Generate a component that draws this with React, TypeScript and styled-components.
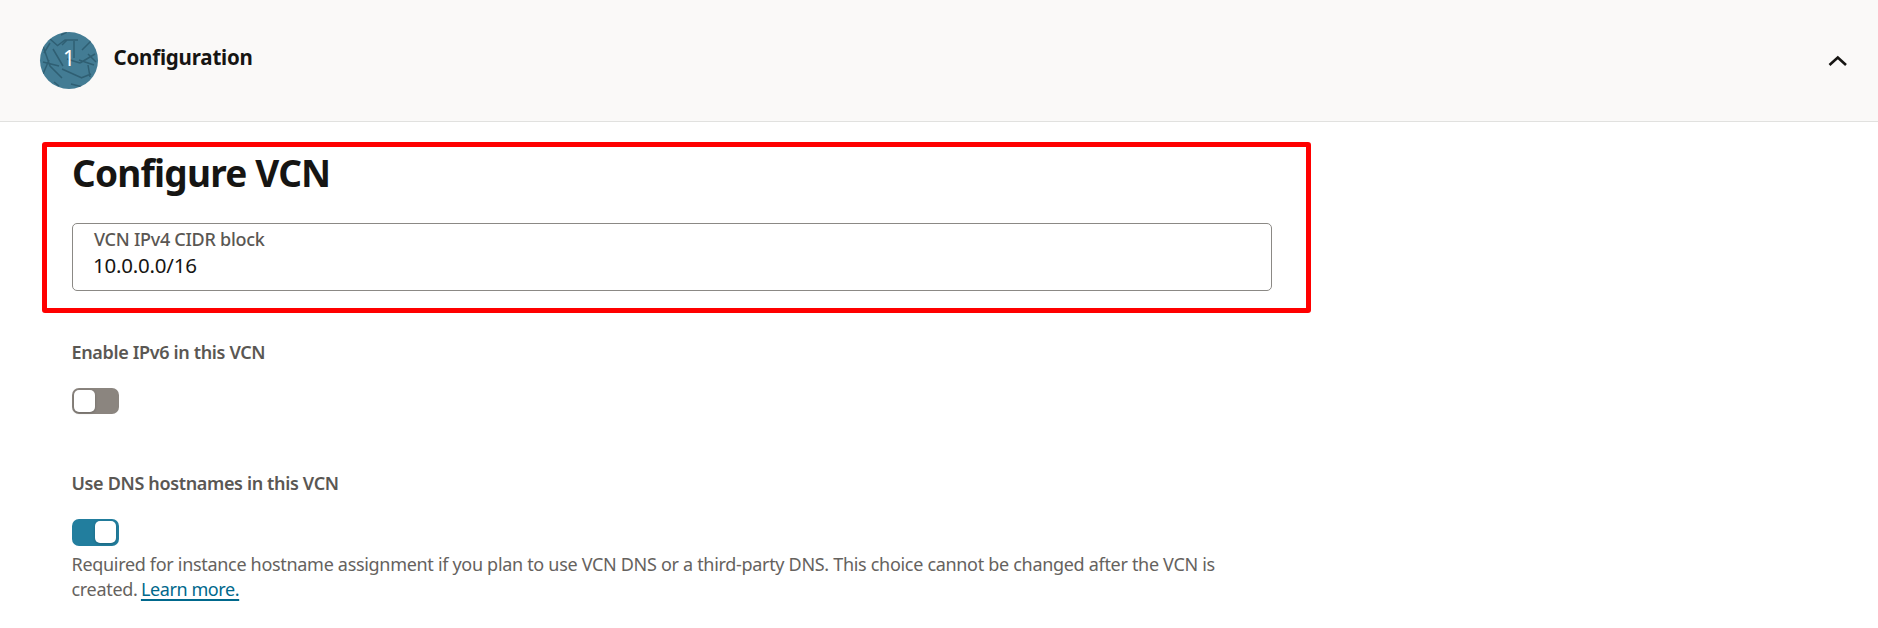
import React from 'react';
import styled, { createGlobalStyle } from 'styled-components';

const GlobalStyle = createGlobalStyle`
  * { box-sizing: border-box; }
  body {
    margin: 0;
    background: #fff;
    color: #161513;
    font-family: "Noto Sans", "Open Sans", sans-serif;
  }
`;

const Page = styled.div`
  height: 628px;
  overflow: hidden;
`;

const Header = styled.header`
  display: flex;
  align-items: flex-start;
  height: 122px;
  padding: 32px 30px 0 40px;
  background: #faf9f8;
  border-bottom: 1px solid #e1e1df;
`;

const Badge = styled.div`
  display: grid;
  width: 58px;
  height: 57px;
  border-radius: 50%;
  overflow: hidden;
  background: #437c94;

  > * { grid-area: 1 / 1; }
`;

const StepNumber = styled.span`
  position: relative;
  justify-self: center;
  color: #fff;
  font-size: 21px;
  line-height: 53px;
`;

const StepTitle = styled.h2`
  flex: 1;
  margin: 11px 0 0 15.5px;
  font-size: 20.5px;
  font-weight: 700;
  line-height: 28px;
  letter-spacing: -0.2px;
`;

const Collapse = styled.svg`
  margin-top: 23px;
`;

const Highlight = styled.section`
  width: 1269px;
  height: 171px;
  margin: 20px 0 0 42px;
  padding: 4px 34px 0 25px;
  border: 5px solid #f00;
  border-radius: 3px;
`;

const Heading = styled.h1`
  margin: 0;
  font-size: 37px;
  font-weight: 700;
  line-height: 44px;
  letter-spacing: -0.8px;
`;

const Field = styled.div`
  width: 1200px;
  height: 68px;
  margin-top: 28px;
  padding: 2px 21px;
  border: 1px solid #8b8985;
  border-radius: 5px;
`;

const Label = styled.div<{ $strong?: boolean }>`
  color: #5a5753;
  font-size: 18px;
  font-weight: ${(p) => (p.$strong ? 600 : 500)};
  line-height: 26px;
  letter-spacing: ${(p) => (p.$strong ? -0.35 : -0.27)}px;
`;

const Value = styled.div`
  margin-left: -1px;
  font-size: 20.5px;
  line-height: 26px;
  letter-spacing: -0.22px;
`;

const Option = styled.section<{ $top: number }>`
  width: 1200px;
  margin: ${(p) => p.$top}px 0 0 71.5px;
`;

const Switch = styled.button<{ $on?: boolean }>`
  display: flex;
  justify-content: ${(p) => (p.$on ? 'flex-end' : 'flex-start')};
  width: 47px;
  height: ${(p) => (p.$on ? 27 : 26)}px;
  margin: 23px 0 0 0.5px;
  padding: ${(p) => (p.$on ? '2px 3px 3px' : '2px')};
  border: 0;
  border-radius: 7px;
  background: ${(p) => (p.$on ? '#227e9e' : '#8b857f')};
`;

const Thumb = styled.span`
  width: 21px;
  height: 22px;
  border-radius: 5px;
  background: #fff;
  box-shadow: 0 1px 3px rgba(0, 0, 0, 0.22);
`;

const Help = styled.p`
  margin: 6px 0 0;
  color: #65625e;
  font-size: 18px;
  line-height: 25px;
  letter-spacing: -0.31px;
  white-space: nowrap;
`;

const Link = styled.a`
  margin-left: -1px;
  color: #00688c;
  letter-spacing: -0.4px;
  text-decoration: underline;
  text-decoration-thickness: 2px;
  text-underline-offset: 3px;
  text-decoration-skip-ink: none;
`;

export default function App() {
  return (
    <Page>
      <GlobalStyle />
      <Header>
        <Badge>
          <svg width="58" height="57" viewBox="0 0 58 57" fill="none" stroke="#2f5f73" strokeWidth="1.5">
            <path d="M10 7l8 7M17 14l8-6h13M22 13l5-5M34 9v17M42 18l10-10M27 27l13 4M39 28l15 5M40 31l15-9M48 22l8 8M13 17l10 17M3 14l7 20 12 12M3 30l16 4M9 28l-6 14M22 37l20 9M41 46l10-4M48 33l2 12M31 52l12 3M14 50l5 4M21 3l6-3M4 21l6-10" />
          </svg>
          <StepNumber>1</StepNumber>
        </Badge>
        <StepTitle>Configuration</StepTitle>
        <Collapse width="20" height="12" viewBox="0 0 20 12" fill="none" stroke="#161513" strokeWidth="2.6">
          <path d="M1.5 10L9.8 2.5L18 10" />
        </Collapse>
      </Header>
      <Highlight>
        <Heading>Configure VCN</Heading>
        <Field>
          <Label>VCN IPv4 CIDR block</Label>
          <Value>10.0.0.0/16</Value>
        </Field>
      </Highlight>
      <Option $top={26}>
        <Label $strong>Enable IPv6 in this VCN</Label>
        <Switch role="switch" aria-checked="false"><Thumb /></Switch>
      </Option>
      <Option $top={56}>
        <Label $strong>Use DNS hostnames in this VCN</Label>
        <Switch $on role="switch" aria-checked="true"><Thumb /></Switch>
        <Help>
          Required for instance hostname assignment if you plan to use VCN DNS or a third-party DNS. This choice cannot be changed after the VCN is
          <br />
          created. <Link>Learn more.</Link>
        </Help>
      </Option>
    </Page>
  );
}
